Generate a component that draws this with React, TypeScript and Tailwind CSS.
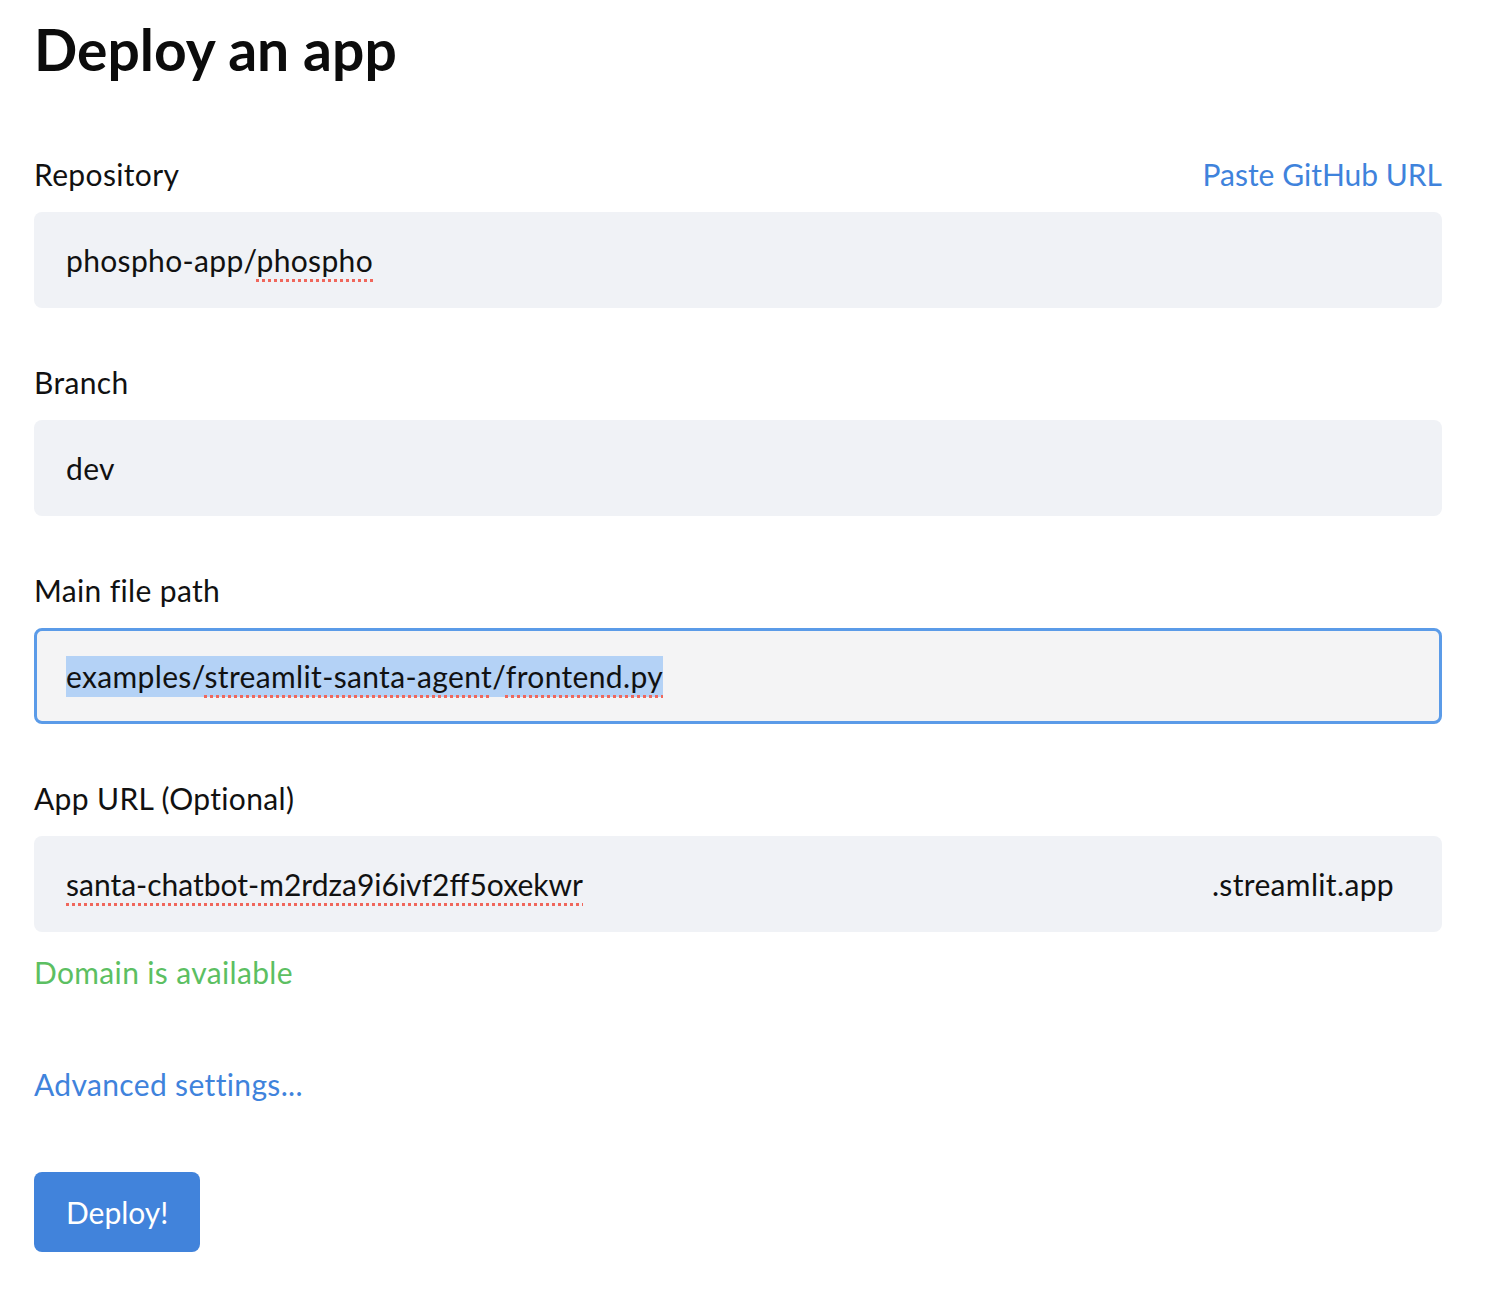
import React from "react";

const font = { fontFamily: "Lato, 'Noto Sans', sans-serif" };

function Label({ children, right }: { children: React.ReactNode; right?: React.ReactNode }) {
  return (
    <div className="flex h-[72px] items-start justify-between pt-[14px]">
      <span className="text-[30px] leading-[40px] tracking-[0.35px] text-[#111]">{children}</span>
      {right}
    </div>
  );
}

const spell =
  "underline decoration-dotted decoration-[#f0675c] decoration-[3px] underline-offset-[7px]";

export default function App() {
  return (
    <div style={font} className="min-h-[1296px] w-[1490px] bg-white pl-[34px] pr-[48px]">
      <h1 className="h-[140px] pt-[14px] text-[57px] font-bold leading-[70px] text-[#0c0c0c]">
        Deploy an app
      </h1>

      <div className="flex flex-col gap-[40px]">
        <div>
          <Label
            right={<a className="text-[30px] leading-[40px] text-[#3f83dc]">Paste GitHub URL</a>}
          >
            Repository
          </Label>
          <div className="flex h-[96px] items-center rounded-[8px] bg-[#f0f2f6] px-[32px] text-[30px] tracking-[0.35px] text-[#111]">
            <span>
              phospho-app/<span className={spell}>phospho</span>
            </span>
          </div>
        </div>

        <div>
          <Label>Branch</Label>
          <div className="flex h-[96px] items-center rounded-[8px] bg-[#f0f2f6] px-[32px] text-[30px] tracking-[0.35px] text-[#111]">
            dev
          </div>
        </div>

        <div>
          <Label>Main file path</Label>
          <div className="flex h-[96px] items-center rounded-[8px] border-[3px] border-[#5b9be8] bg-[#f4f4f5] px-[29px] text-[30px] tracking-[0.35px] text-[#111]">
            <span className="bg-[#b4d2f6] leading-[41px]">
              examples/<span className={spell}>streamlit-santa-agent</span>/<span className={spell}>frontend.py</span>
            </span>
          </div>
        </div>

        <div>
          <Label>App URL (Optional)</Label>
          <div className="flex h-[96px] items-center justify-between rounded-[8px] bg-[#f0f2f6] pl-[32px] pr-[48px] text-[30px] text-[#111]">
            <span className={spell}>santa-chatbot-m2rdza9i6ivf2ff5oxekwr</span>
            <span className="tracking-[0.35px]">.streamlit.app</span>
          </div>
          <div className="mt-[20px] text-[30px] leading-[40px] tracking-[0.35px] text-[#5cbf62]">Domain is available</div>
        </div>
      </div>

      <div className="mt-[72px] text-[30px] leading-[40px] tracking-[0.35px] text-[#3f83dc]">Advanced settings...</div>

      <button className="mt-[68px] flex h-[80px] items-center rounded-[8px] bg-[#4183db] px-[32px] text-[30px] text-white">
        Deploy!
      </button>
    </div>
  );
}
